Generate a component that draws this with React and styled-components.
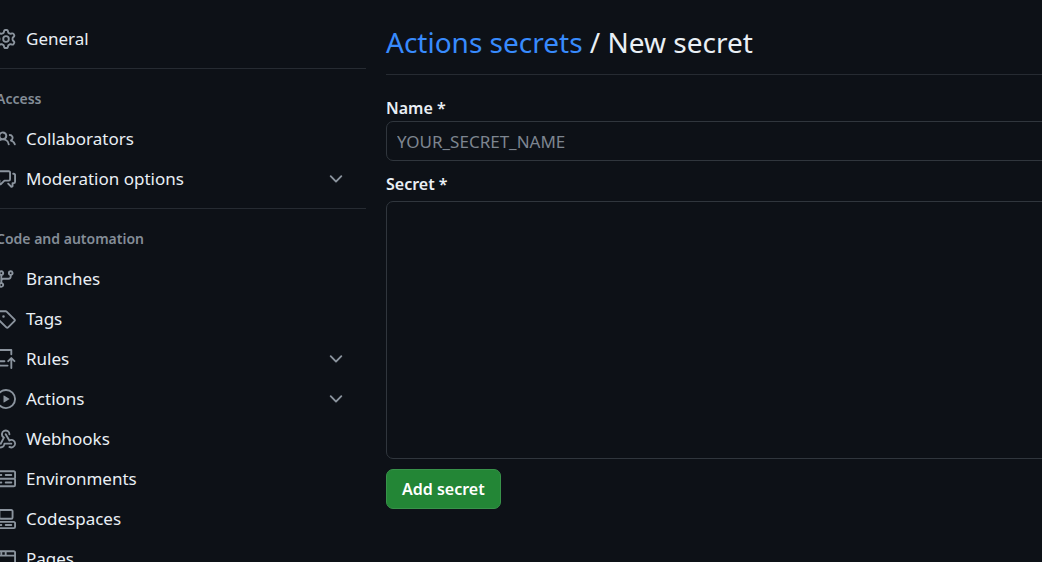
import React from "react";
import styled, { createGlobalStyle } from "styled-components";

const GlobalStyle = createGlobalStyle`
  *, *::before, *::after { box-sizing: border-box; }
  body {
    margin: 0;
    background: #0d1117;
    color: #e9eff5;
    font-family: "Segoe UI", "Noto Sans", sans-serif;
    font-size: 17px;
    line-height: 24px;
  }
`;

const Page = styled.div`
  display: flex;
  gap: 20px;
  height: 100vh;
  overflow: hidden;
`;

const Sidebar = styled.nav`
  flex: 0 0 370px;
  margin-left: -4px;
  padding-top: 19px;
`;

const NavList = styled.ul`
  list-style: none;
  margin: 0;
  padding: 0;
`;

const Group = styled.section`
  margin-top: 9px;
  border-top: 1px solid #262b32;
`;

const GroupTitle = styled.h2`
  margin: 0;
  padding: 20px 0 10px;
  font-size: 14px;
  line-height: 20px;
  font-weight: 600;
  color: #848d97;
`;

const navItem = `
  display: flex;
  align-items: center;
  gap: 10px;
  width: 100%;
  height: 40px;
  padding: 0 20px 0 0;
  border: 0;
  background: none;
  color: inherit;
  font: inherit;
  text-align: left;
  text-decoration: none;
  cursor: pointer;
`;

const NavLink = styled.a`${navItem}`;
const NavToggle = styled.button`${navItem}`;

const NavLabel = styled.span`
  flex: 1;
`;

const Icon = styled.svg`
  flex: none;
  width: 20px;
  height: 20px;
  fill: #8b949e;
`;

const Main = styled.main`
  flex: 1;
  min-width: 0;
  margin-right: -10px;
  padding-top: 22px;
`;

const Title = styled.h1`
  margin: 0 0 20px;
  padding-bottom: 12px;
  border-bottom: 1px solid #262b32;
  font-size: 28px;
  line-height: 40px;
  font-weight: 400;
`;

const TitleLink = styled.a`
  color: #388bfd;
  text-decoration: none;
`;

const Form = styled.form`
  display: flex;
  flex-direction: column;
  align-items: stretch;
`;

const Field = styled.div`
  display: flex;
  flex-direction: column;
  margin-bottom: 10px;
`;

const Label = styled.label`
  font-size: 16px;
  font-weight: 600;
  line-height: 26px;
  padding-bottom: ${(p) => (p.$spaced ? "4px" : "0")};
`;

const fieldBox = `
  display: block;
  width: 100%;
  margin: 0;
  border: 1px solid #30363d;
  border-radius: 7px;
  background: #0d1117;
  color: inherit;
  font: inherit;
  outline: none;
  &::placeholder { color: #7d8590; opacity: 1; }
`;

const TextInput = styled.input`
  ${fieldBox}
  height: 40px;
  padding: 0 10px;
`;

const TextArea = styled.textarea`
  ${fieldBox}
  height: 258px;
  padding: 10px;
  resize: none;
`;

const SubmitButton = styled.button`
  align-self: flex-start;
  height: 40px;
  padding: 0 15px;
  border: 1px solid #38924a;
  border-radius: 7px;
  background: #238636;
  color: #fff;
  font: inherit;
  font-size: 16px;
  font-weight: 600;
  cursor: pointer;
`;

const paths = {
  gear: "M8 0a8.2 8.2 0 0 1 .701.031C9.444.095 9.99.645 10.16 1.29l.288 1.107c.018.066.079.158.212.224.231.114.454.243.668.386.123.082.233.09.299.071l1.103-.303c.644-.176 1.392.021 1.82.63.27.385.506.792.704 1.218.315.675.111 1.422-.364 1.891l-.814.806c-.049.048-.098.147-.088.294.016.257.016.515 0 .772-.01.147.038.246.088.294l.814.806c.475.469.679 1.216.364 1.891a7.977 7.977 0 0 1-.704 1.217c-.428.61-1.176.807-1.82.63l-1.102-.302c-.067-.019-.177-.011-.3.071a5.909 5.909 0 0 1-.668.386c-.133.066-.194.158-.211.224l-.29 1.106c-.168.646-.715 1.196-1.458 1.26a8.006 8.006 0 0 1-1.402 0c-.743-.064-1.289-.614-1.458-1.26l-.289-1.106c-.018-.066-.079-.158-.212-.224a5.738 5.738 0 0 1-.668-.386c-.123-.082-.233-.09-.299-.071l-1.103.303c-.644.176-1.392-.021-1.82-.63a8.12 8.12 0 0 1-.704-1.218c-.315-.675-.111-1.422.363-1.891l.815-.806c.05-.048.098-.147.088-.294a6.214 6.214 0 0 1 0-.772c.01-.147-.038-.246-.088-.294l-.815-.806C.635 6.045.431 5.298.746 4.623a7.92 7.92 0 0 1 .704-1.217c.428-.61 1.176-.807 1.82-.63l1.102.302c.067.019.177.011.3-.071.214-.143.437-.272.668-.386.133-.066.194-.158.211-.224l.29-1.106C6.009.645 6.556.095 7.299.03 7.53.01 7.764 0 8 0Zm-.571 1.525c-.036.003-.108.036-.137.146l-.289 1.105c-.147.561-.549.967-.998 1.189-.173.086-.34.183-.5.29-.417.278-.97.423-1.529.27l-1.103-.303c-.109-.03-.175.016-.195.045-.22.312-.412.644-.573.99-.014.031-.021.11.059.19l.815.806c.411.406.562.957.53 1.456a4.709 4.709 0 0 0 0 .582c.032.499-.119 1.05-.53 1.456l-.815.806c-.081.08-.073.159-.059.19.162.346.353.677.573.989.02.03.085.076.195.046l1.102-.303c.56-.153 1.113-.008 1.53.27.161.107.328.204.501.29.447.222.85.629.997 1.189l.289 1.105c.029.109.101.143.137.146a6.6 6.6 0 0 0 1.142 0c.036-.003.108-.036.137-.146l.289-1.105c.147-.561.549-.967.998-1.189.173-.086.34-.183.5-.29.417-.278.97-.423 1.529-.27l1.103.303c.109.029.175-.016.195-.045.22-.313.411-.644.573-.99.014-.031.021-.11-.059-.19l-.815-.806c-.411-.406-.562-.957-.53-1.456a4.709 4.709 0 0 0 0-.582c-.032-.499.119-1.05.53-1.456l.815-.806c.081-.08.073-.159.059-.19a6.464 6.464 0 0 0-.573-.989c-.02-.03-.085-.076-.195-.046l-1.102.303c-.56.153-1.113.008-1.53-.27a4.44 4.44 0 0 0-.501-.29c-.447-.222-.85-.629-.997-1.189l-.289-1.105c-.029-.11-.101-.143-.137-.146a6.6 6.6 0 0 0-1.142 0ZM11 8a3 3 0 1 1-6 0 3 3 0 0 1 6 0ZM9.5 8a1.5 1.5 0 1 0-3.001.001A1.5 1.5 0 0 0 9.5 8Z",
  people: "M2 5.5a3.5 3.5 0 1 1 5.898 2.549 5.508 5.508 0 0 1 3.034 4.084.75.75 0 1 1-1.482.235 4 4 0 0 0-7.9 0 .75.75 0 0 1-1.482-.236A5.507 5.507 0 0 1 3.102 8.05 3.493 3.493 0 0 1 2 5.5ZM11 4a3.001 3.001 0 0 1 2.22 5.018 5.01 5.01 0 0 1 2.56 3.012.749.749 0 0 1-.885.954.752.752 0 0 1-.549-.514 3.507 3.507 0 0 0-2.522-2.372.75.75 0 0 1-.574-.73v-.352a.75.75 0 0 1 .416-.672A1.5 1.5 0 0 0 11 5.5.75.75 0 0 1 11 4Zm-5.5-.5a2 2 0 1 0-.001 3.999A2 2 0 0 0 5.5 3.5Z",
  discussion: "M1.75 1h8.5c.966 0 1.75.784 1.75 1.75v5.5A1.75 1.75 0 0 1 10.25 10H7.061l-2.574 2.573A1.458 1.458 0 0 1 2 11.543V10h-.25A1.75 1.75 0 0 1 0 8.25v-5.5C0 1.784.784 1 1.75 1ZM1.5 2.75v5.5c0 .138.112.25.25.25h1a.75.75 0 0 1 .75.75v2.19l2.72-2.72a.749.749 0 0 1 .53-.22h3.5a.25.25 0 0 0 .25-.25v-5.5a.25.25 0 0 0-.25-.25h-8.5a.25.25 0 0 0-.25.25Zm13 2a.25.25 0 0 0-.25-.25h-.5a.75.75 0 0 1 0-1.5h.5c.966 0 1.75.784 1.75 1.75v5.5A1.75 1.75 0 0 1 14.25 12H14v1.543a1.458 1.458 0 0 1-2.487 1.03L9.22 12.28a.749.749 0 0 1 .326-1.275.749.749 0 0 1 .734.215l2.22 2.22v-2.19a.75.75 0 0 1 .75-.75h1a.25.25 0 0 0 .25-.25Z",
  branch: "M9.5 3.25a2.25 2.25 0 1 1 3 2.122V6A2.5 2.5 0 0 1 10 8.5H6a1 1 0 0 0-1 1v1.128a2.251 2.251 0 1 1-1.5 0V5.372a2.25 2.25 0 1 1 1.5 0v1.836A2.493 2.493 0 0 1 6 7h4a1 1 0 0 0 1-1v-.628A2.25 2.25 0 0 1 9.5 3.25Zm-6 0a.75.75 0 1 0 1.5 0 .75.75 0 0 0-1.5 0Zm8.25-.75a.75.75 0 1 0 0 1.5.75.75 0 0 0 0-1.5ZM4.25 12a.75.75 0 1 0 0 1.5.75.75 0 0 0 0-1.5Z",
  tag: "M1 7.775V2.75C1 1.784 1.784 1 2.75 1h5.025c.464 0 .91.184 1.238.513l6.25 6.25a1.75 1.75 0 0 1 0 2.474l-5.026 5.026a1.75 1.75 0 0 1-2.474 0l-6.25-6.25A1.752 1.752 0 0 1 1 7.775Zm1.5 0c0 .066.026.13.073.177l6.25 6.25a.25.25 0 0 0 .354 0l5.025-5.025a.25.25 0 0 0 0-.354l-6.25-6.25a.25.25 0 0 0-.177-.073H2.75a.25.25 0 0 0-.25.25ZM6 5a1 1 0 1 1 0 2 1 1 0 0 1 0-2Z",
  rules: "M1 2.5A2.5 2.5 0 0 1 3.5 0h8.75a.75.75 0 0 1 .75.75v3.5a.75.75 0 0 1-1.5 0V1.5h-8a1 1 0 0 0-1 1v6.708A2.493 2.493 0 0 1 3.5 9h3.25a.75.75 0 0 1 0 1.5H3.5a1 1 0 0 0 0 2h5.75a.75.75 0 0 1 0 1.5H3.5A2.5 2.5 0 0 1 1 11.5Zm13.23 7.79h-.001l-1.224-1.224v6.184a.75.75 0 0 1-1.5 0V9.066L10.28 10.29a.75.75 0 0 1-1.06-1.061l2.505-2.504a.75.75 0 0 1 1.06 0L15.29 9.23a.751.751 0 0 1-.018 1.042.751.751 0 0 1-1.042.018Z",
  play: "M8 0a8 8 0 1 1 0 16A8 8 0 0 1 8 0ZM1.5 8a6.5 6.5 0 1 0 13 0 6.5 6.5 0 0 0-13 0Zm4.879-2.773 4.264 2.559a.25.25 0 0 1 0 .428l-4.264 2.559A.25.25 0 0 1 6 10.559V5.442a.25.25 0 0 1 .379-.215Z",
  webhook: "M5.5 4.25a2.25 2.25 0 0 1 4.5 0 .75.75 0 0 0 1.5 0 3.75 3.75 0 1 0-6.14 2.889l-2.272 4.258a.75.75 0 0 0 1.324.706L7 7.25a.75.75 0 0 0-.309-1.015A2.25 2.25 0 0 1 5.5 4.25ZM7.364 3.607a.75.75 0 0 1 1.03.257l2.608 4.349a3.75 3.75 0 1 1-.628 6.785.75.75 0 0 1 .752-1.299 2.25 2.25 0 1 0-.033-3.88.75.75 0 0 1-1.03-.256L7.107 4.636a.75.75 0 0 1 .257-1.03ZM2.9 8.776A.75.75 0 0 1 2.625 9.8 2.25 2.25 0 1 0 6 11.75a.75.75 0 0 1 .75-.751h5.5a.75.75 0 0 1 0 1.5H7.425a3.751 3.751 0 1 1-5.55-3.998.75.75 0 0 1 1.024.274Z",
  server: "M1.75 1h12.5c.966 0 1.75.784 1.75 1.75v4c0 .372-.116.717-.314 1 .198.283.314.628.314 1v4a1.75 1.75 0 0 1-1.75 1.75H1.75A1.75 1.75 0 0 1 0 12.75v-4c0-.358.109-.707.314-1a1.739 1.739 0 0 1-.314-1v-4C0 1.784.784 1 1.75 1ZM1.5 2.75v4c0 .138.112.25.25.25h12.5a.25.25 0 0 0 .25-.25v-4a.25.25 0 0 0-.25-.25H1.75a.25.25 0 0 0-.25.25Zm.25 5.75a.25.25 0 0 0-.25.25v4c0 .138.112.25.25.25h12.5a.25.25 0 0 0 .25-.25v-4a.25.25 0 0 0-.25-.25ZM7 4.75A.75.75 0 0 1 7.75 4h4.5a.75.75 0 0 1 0 1.5h-4.5A.75.75 0 0 1 7 4.75ZM7.75 10h4.5a.75.75 0 0 1 0 1.5h-4.5a.75.75 0 0 1 0-1.5ZM3 4.75A.75.75 0 0 1 3.75 4h.5a.75.75 0 0 1 0 1.5h-.5A.75.75 0 0 1 3 4.75ZM3.75 10h.5a.75.75 0 0 1 0 1.5h-.5a.75.75 0 0 1 0-1.5Z",
  codespaces: "M0 11.25c0-.966.784-1.75 1.75-1.75h12.5c.966 0 1.75.784 1.75 1.75v3A1.75 1.75 0 0 1 14.25 16H1.75A1.75 1.75 0 0 1 0 14.25Zm2-9.5C2 .784 2.784 0 3.75 0h8.5C13.216 0 14 .784 14 1.75v5a1.75 1.75 0 0 1-1.75 1.75h-8.5A1.75 1.75 0 0 1 2 6.75Zm1.75-.25a.25.25 0 0 0-.25.25v5c0 .138.112.25.25.25h8.5a.25.25 0 0 0 .25-.25v-5a.25.25 0 0 0-.25-.25Zm-2 9.5a.25.25 0 0 0-.25.25v3c0 .138.112.25.25.25h12.5a.25.25 0 0 0 .25-.25v-3a.25.25 0 0 0-.25-.25ZM7 12.75a.75.75 0 0 1 .75-.75h4.5a.75.75 0 0 1 0 1.5h-4.5a.75.75 0 0 1-.75-.75Zm-4 0a.75.75 0 0 1 .75-.75h.5a.75.75 0 0 1 0 1.5h-.5a.75.75 0 0 1-.75-.75Z",
  browser: "M0 2.75C0 1.784.784 1 1.75 1h12.5c.966 0 1.75.784 1.75 1.75v10.5A1.75 1.75 0 0 1 14.25 15H1.75A1.75 1.75 0 0 1 0 13.25ZM14.5 6h-13v7.25c0 .138.112.25.25.25h12.5a.25.25 0 0 0 .25-.25Zm-6-3.5v2h6V2.75a.25.25 0 0 0-.25-.25ZM5 2.5v2h2v-2Zm-3.25 0a.25.25 0 0 0-.25.25V4.5h2v-2Z",
  chevron: "M12.78 5.22a.749.749 0 0 1 0 1.06l-4.25 4.25a.749.749 0 0 1-1.06 0L3.22 6.28a.749.749 0 1 1 1.06-1.06L8 8.939l3.72-3.719a.749.749 0 0 1 1.06 0Z",
};

function Octicon({ name }) {
  return (
    <Icon viewBox="0 0 16 16" aria-hidden="true">
      <path d={paths[name]} />
    </Icon>
  );
}

function NavItem({ icon, label, expandable }) {
  return (
    <li>
      {expandable ? (
        <NavToggle type="button" aria-expanded="false">
          <Octicon name={icon} />
          <NavLabel>{label}</NavLabel>
          <Octicon name="chevron" />
        </NavToggle>
      ) : (
        <NavLink href="#">
          <Octicon name={icon} />
          <NavLabel>{label}</NavLabel>
        </NavLink>
      )}
    </li>
  );
}

const groups = [
  {
    title: "Access",
    items: [
      { icon: "people", label: "Collaborators" },
      { icon: "discussion", label: "Moderation options", expandable: true },
    ],
  },
  {
    title: "Code and automation",
    items: [
      { icon: "branch", label: "Branches" },
      { icon: "tag", label: "Tags" },
      { icon: "rules", label: "Rules", expandable: true },
      { icon: "play", label: "Actions", expandable: true },
      { icon: "webhook", label: "Webhooks" },
      { icon: "server", label: "Environments" },
      { icon: "codespaces", label: "Codespaces" },
      { icon: "browser", label: "Pages" },
    ],
  },
];

export default function App() {
  return (
    <>
      <GlobalStyle />
      <Page>
        <Sidebar aria-label="Repository settings">
          <NavList>
            <NavItem icon="gear" label="General" />
          </NavList>
          {groups.map((group) => (
            <Group key={group.title}>
              <GroupTitle>{group.title}</GroupTitle>
              <NavList>
                {group.items.map((item) => (
                  <NavItem key={item.label} {...item} />
                ))}
              </NavList>
            </Group>
          ))}
        </Sidebar>
        <Main>
          <Title>
            <TitleLink href="#">Actions secrets</TitleLink> / New secret
          </Title>
          <Form onSubmit={(e) => e.preventDefault()}>
            <Field>
              <Label htmlFor="secret-name">Name *</Label>
              <TextInput id="secret-name" placeholder="YOUR_SECRET_NAME" />
            </Field>
            <Field>
              <Label htmlFor="secret-value" $spaced>Secret *</Label>
              <TextArea id="secret-value" />
            </Field>
            <SubmitButton type="submit">Add secret</SubmitButton>
          </Form>
        </Main>
      </Page>
    </>
  );
}
